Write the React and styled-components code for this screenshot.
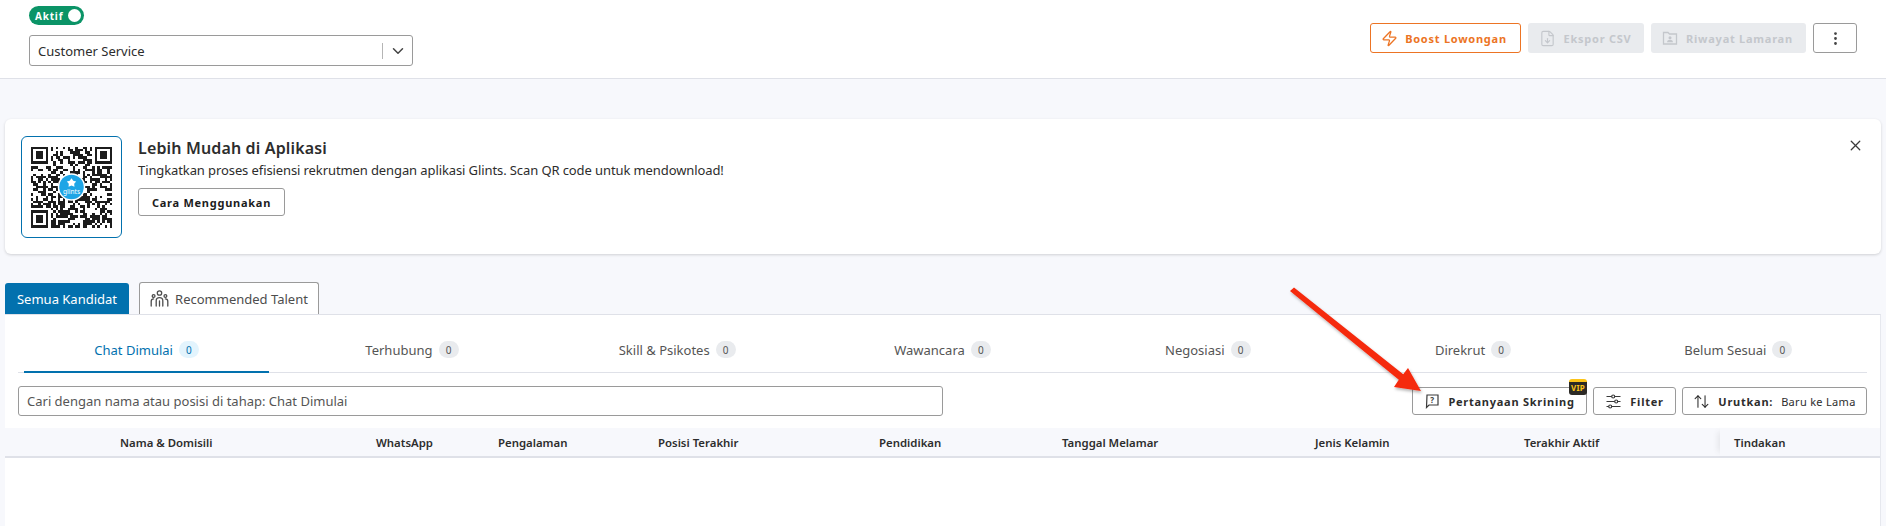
import React from "react";
import styled, { createGlobalStyle } from "styled-components";
import { ArrowUpDown, ChevronDown, FileDown, MoreVertical, X, Zap } from "lucide-react";

const GlobalStyle = createGlobalStyle`
  * { box-sizing: border-box; }
  html, body { margin: 0; padding: 0; background: #f7f8fc; }
  body { font-family: "Noto Sans", "Open Sans", sans-serif; color: #2d2d2d; overflow: hidden; }
`;

const stages = ["Chat Dimulai", "Terhubung", "Skill & Psikotes", "Wawancara", "Negosiasi", "Direkrut", "Belum Sesuai"];
const columns = ["Nama & Domisili", "WhatsApp", "Pengalaman", "Posisi Terakhir", "Pendidikan", "Tanggal Melamar", "Jenis Kelamin", "Terakhir Aktif"];

// pseudo random modules for the qr code, corners are the finder squares
function qrModules(size) {
  const cells = [];
  let seed = 71;
  for (let y = 0; y < size; y++) {
    for (let x = 0; x < size; x++) {
      seed = (seed * 1103 + 12345 + x * 7 + y * 13) % 65536;
      const inFinder = (x < 8 && y < 8) || (x >= size - 8 && y < 8) || (x < 8 && y >= size - 8);
      if (!inFinder && (seed >> 5) % 100 < 52) cells.push([x, y]);
    }
  }
  return cells;
}

function Finder({ x, y }) {
  return (
    <g>
      <rect x={x + 0.5} y={y + 0.5} width="6" height="6" fill="none" stroke="#1c1c1c" />
      <rect x={x + 2} y={y + 2} width="3" height="3" fill="#1c1c1c" />
    </g>
  );
}

function QrCode() {
  const size = 33;
  return (
    <QrSvg viewBox={`0 0 ${size} ${size}`} shapeRendering="crispEdges">
      {qrModules(size).map(([x, y]) => (
        <rect key={`${x}-${y}`} x={x} y={y} width="1" height="1" fill="#1c1c1c" />
      ))}
      <Finder x={0} y={0} />
      <Finder x={size - 7} y={0} />
      <Finder x={0} y={size - 7} />
      <g shapeRendering="auto">
        <circle cx="16.5" cy="16.5" r="5.6" fill="#fff" />
        <circle cx="16.5" cy="16.5" r="5" fill="#1ea5e6" />
        <path d="M16.5 12.9l.7 1.100 1.200.3-.8.9.1 1.200-1.200-.5-1.200.5.1-1.200-.8-.9 1.200-.3z" fill="#fff" />
        <text x="16.5" y="19.4" textAnchor="middle" fontSize="2.7" fill="#fff" fontFamily="Noto Sans, sans-serif">glints</text>
      </g>
    </QrSvg>
  );
}

function HistoryIcon() {
  return (
    <svg width="16" height="16" viewBox="0 0 16 16" fill="none" stroke="currentColor" strokeWidth="1.3">
      <path d="M1.5 2.5h4.5l1.5 1.5h7v10h-13z" />
      <circle cx="8" cy="7.8" r="1.5" fill="currentColor" stroke="none" />
      <path d="M5 12.2c.3-1.7 1.4-2.4 3-2.4s2.7.7 3 2.4z" fill="currentColor" stroke="none" />
    </svg>
  );
}

function PeopleIcon() {
  return (
    <svg width="19" height="19" viewBox="0 0 19 19" fill="none" stroke="#4d4d4d" strokeWidth="1.3" strokeLinecap="round">
      <circle cx="9.5" cy="4" r="2.2" />
      <circle cx="3.6" cy="7" r="1.4" />
      <circle cx="15.4" cy="7" r="1.4" />
      <path d="M6.2 17v-5.2c0-2 1.4-3.1 3.3-3.1s3.3 1.100 3.300 3.100V17" />
      <path d="M1.200 17v-4.600c0-1.500.9-2.500 2.400-2.500" />
      <path d="M17.800 17v-4.600c0-1.500-.9-2.500-2.400-2.500" />
      <path d="M9.500 12v5" />
    </svg>
  );
}

function QuestionIcon() {
  return (
    <svg width="16" height="16" viewBox="0 0 16 16" fill="none" stroke="#3a3a3a" strokeWidth="1.2">
      <path d="M3 2h11v10H5l-2.500 2.500z" />
      <text x="8.500" y="10" textAnchor="middle" fontSize="8" fill="#3a3a3a" stroke="none" fontFamily="Noto Sans, sans-serif">?</text>
    </svg>
  );
}

function FilterIcon() {
  return (
    <svg width="17" height="17" viewBox="0 0 17 17" fill="none" stroke="#3a3a3a" strokeWidth="1.2">
      <path d="M1.500 3.500h5.200M9.700 3.500h5.800M1.500 8.500h8.200M12.700 8.500h2.800M1.500 13.500h2.200M6.700 13.500h8.800" />
      <circle cx="8.200" cy="3.500" r="1.500" />
      <circle cx="11.200" cy="8.500" r="1.500" />
      <circle cx="5.200" cy="13.500" r="1.500" />
    </svg>
  );
}

export default function App() {
  return (
    <Page>
      <GlobalStyle />
      <TopBar>
        <JobColumn>
          <Toggle>
            <ToggleLabel>Aktif</ToggleLabel>
            <ToggleKnob />
          </Toggle>
          <JobSelect>
            <JobName>Customer Service</JobName>
            <SelectDivider />
            <SelectArrow>
              <ChevronDown size={18} strokeWidth={2} />
            </SelectArrow>
          </JobSelect>
        </JobColumn>
        <TopActions>
          <BoostButton>
            <Zap size={17} strokeWidth={1.8} />
            Boost Lowongan
          </BoostButton>
          <DisabledButton $width={116}>
            <FileDown size={17} strokeWidth={1.6} />
            Ekspor CSV
          </DisabledButton>
          <DisabledButton $width={155}>
            <HistoryIcon />
            Riwayat Lamaran
          </DisabledButton>
          <MoreButton>
            <MoreVertical size={17} strokeWidth={2} />
          </MoreButton>
        </TopActions>
      </TopBar>

      <Banner>
        <QrFrame>
          <QrCode />
        </QrFrame>
        <BannerBody>
          <BannerTitle>Lebih Mudah di Aplikasi</BannerTitle>
          <BannerText>
            Tingkatkan proses efisiensi rekrutmen dengan aplikasi Glints. Scan QR code untuk mendownload!
          </BannerText>
          <GuideButton>Cara Menggunakan</GuideButton>
        </BannerBody>
        <BannerClose>
          <X size={17} strokeWidth={1.8} />
        </BannerClose>
      </Banner>

      <TabRow>
        <MainTab>Semua Kandidat</MainTab>
        <TalentTab>
          <PeopleIcon />
          Recommended Talent
        </TalentTab>
      </TabRow>

      <Panel>
        <StageRow>
          {stages.map((stage, i) => (
            <StageTab key={stage} $active={i === 0}>
              {stage}
              <StageCount $active={i === 0}>0</StageCount>
            </StageTab>
          ))}
        </StageRow>
        <ToolRow>
          <SearchBox>Cari dengan nama atau posisi di tahap: Chat Dimulai</SearchBox>
          <ToolActions>
            <ToolButton $width={175}>
              <QuestionIcon />
              Pertanyaan Skrining
              <VipBadge>VIP</VipBadge>
            </ToolButton>
            <ToolButton $width={83}>
              <FilterIcon />
              Filter
            </ToolButton>
            <ToolButton $width={185}>
              <ArrowUpDown size={17} strokeWidth={1.5} />
              Urutkan:
              <SortValue>Baru ke Lama</SortValue>
            </ToolButton>
          </ToolActions>
        </ToolRow>
        <TableHead>
          {columns.map((col) => (
            <HeadCell key={col}>{col}</HeadCell>
          ))}
          <ActionCell>Tindakan</ActionCell>
        </TableHead>
      </Panel>

      <Arrow viewBox="0 0 140 110" width="140" height="110">
        <defs>
          <filter id="arrowShadow" x="-20%" y="-20%" width="140%" height="140%">
            <feDropShadow dx="1" dy="2" stdDeviation="1.500" floodColor="#000" floodOpacity="0.3" />
          </filter>
        </defs>
        <g filter="url(#arrowShadow)" fill="#f5290f">
          <path d="M7 .5L116.200 87.200 121 81l13 23-27-4 4.800-7.300L3 4z" />
        </g>
      </Arrow>
    </Page>
  );
}

const Page = styled.div`
  position: relative;
  width: 1886px;
  height: 526px;
  overflow: hidden;
  background: #f7f8fc;
`;
const TopBar = styled.header`
  display: flex;
  justify-content: space-between;
  align-items: flex-start;
  height: 79px;
  padding: 6px 29px 0;
  background: #fff;
  border-bottom: 1px solid #dfe1e8;
`;
const JobColumn = styled.div`
  display: flex;
  flex-direction: column;
  align-items: flex-start;
  gap: 10px;
`;
const Toggle = styled.div`
  display: flex;
  align-items: center;
  justify-content: space-between;
  width: 55px;
  height: 19px;
  padding: 0 3px 0 6px;
  border-radius: 10px;
  background: #0b9467;
`;
const ToggleLabel = styled.span`
  font-size: 10px;
  font-weight: 700;
  letter-spacing: 0.8px;
  color: #fff;
`;
const ToggleKnob = styled.span`
  width: 13px;
  height: 13px;
  border-radius: 50%;
  background: #fff;
`;
const JobSelect = styled.div`
  display: flex;
  align-items: center;
  width: 384px;
  height: 31px;
  padding: 0 0 0 8px;
  background: #fff;
  border: 1px solid #9a9a9a;
  border-radius: 3px;
`;
const JobName = styled.span`
  flex: 1;
  font-size: 13px;
  color: #2d2d2d;
`;
const SelectDivider = styled.span`
  width: 1px;
  height: 16px;
  background: #b5b5b5;
`;
const SelectArrow = styled.span`
  display: flex;
  justify-content: center;
  width: 29px;
  color: #444;
`;
const TopActions = styled.div`
  display: flex;
  gap: 7px;
  margin-top: 17px;
`;
const BoostButton = styled.button`
  display: flex;
  align-items: center;
  justify-content: center;
  gap: 7px;
  width: 151px;
  height: 30px;
  padding: 0 3px 0 0;
  background: #fff;
  border: 1px solid #ec7424;
  border-radius: 3px;
  color: #ec7424;
  font: 700 11px "Noto Sans", sans-serif;
  letter-spacing: 0.75px;
`;
const DisabledButton = styled.button`
  display: flex;
  align-items: center;
  justify-content: center;
  gap: 8px;
  width: ${(p) => p.$width}px;
  height: 30px;
  padding: 0 2px 0 0;
  background: #e9ebee;
  border: none;
  border-radius: 3px;
  color: #c4c7cc;
  font: 700 11px "Noto Sans", sans-serif;
  letter-spacing: 0.75px;
`;
const MoreButton = styled.button`
  display: flex;
  align-items: center;
  justify-content: center;
  width: 44px;
  height: 30px;
  padding: 0;
  background: #fff;
  border: 1px solid #9a9a9a;
  border-radius: 3px;
  color: #444;
`;
const Banner = styled.section`
  position: relative;
  display: flex;
  gap: 16px;
  height: 135px;
  margin: 40px 5px 0;
  padding: 17px 16px;
  background: #fff;
  border-radius: 6px;
  box-shadow: 0 1px 3px rgba(0, 0, 0, 0.16);
`;
const QrFrame = styled.div`
  display: flex;
  align-items: center;
  justify-content: center;
  width: 101px;
  height: 102px;
  background: #fff;
  border: 1px solid #0271ae;
  border-radius: 6px;
`;
const QrSvg = styled.svg`
  width: 81px;
  height: 82px;
`;
const BannerBody = styled.div`
  display: flex;
  flex-direction: column;
  align-items: flex-start;
`;
const BannerTitle = styled.h2`
  margin: 0;
  font-size: 16px;
  line-height: 24px;
  font-weight: 600;
  letter-spacing: 0.15px;
  color: #2d2d2d;
`;
const BannerText = styled.p`
  margin: 0;
  font-size: 13px;
  line-height: 20px;
  letter-spacing: -0.1px;
  color: #2d2d2d;
`;
const GuideButton = styled.button`
  width: 147px;
  height: 28px;
  margin-top: 8px;
  padding: 0;
  background: #fff;
  border: 1px solid #9a9a9a;
  border-radius: 3px;
  color: #1c1c1c;
  font: 700 11px "Noto Sans", sans-serif;
  letter-spacing: 0.75px;
`;
const BannerClose = styled.span`
  position: absolute;
  top: 18px;
  right: 17px;
  display: flex;
  color: #3a3a3a;
`;
const TabRow = styled.div`
  display: flex;
  align-items: flex-end;
  gap: 10px;
  height: 32px;
  margin: 28px 5px 0;
`;
const MainTab = styled.div`
  display: flex;
  align-items: center;
  justify-content: center;
  width: 124px;
  height: 31px;
  background: #0271ae;
  border-radius: 3px 3px 0 0;
  color: #fff;
  font-size: 13px;
`;
const TalentTab = styled.div`
  display: flex;
  align-items: center;
  justify-content: center;
  gap: 6px;
  width: 180px;
  height: 32px;
  background: #fff;
  border: 1px solid #9a9a9a;
  border-bottom: none;
  border-radius: 3px 3px 0 0;
  color: #4d4d4d;
  font-size: 13px;
`;
const Panel = styled.section`
  height: 220px;
  margin: 0 5px;
  background: #fff;
  border-top: 1px solid #dfe1e8;
  border-right: 1px solid #e6e8ee;
`;
const StageRow = styled.nav`
  display: grid;
  grid-template-columns: repeat(7, 1fr);
  gap: 20px;
  height: 58px;
  margin: 0 13px;
  padding: 0 6px;
  border-bottom: 1px solid #dfe1e8;
`;
const StageTab = styled.div`
  display: flex;
  align-items: center;
  justify-content: center;
  gap: 6px;
  padding-top: 13px;
  margin-bottom: -1px;
  font-size: 13px;
  color: ${(p) => (p.$active ? "#0271ae" : "#555")};
  border-bottom: 2px solid ${(p) => (p.$active ? "#0271ae" : "transparent")};
`;
const StageCount = styled.span`
  display: flex;
  align-items: center;
  justify-content: center;
  min-width: 20px;
  height: 17px;
  border-radius: 9px;
  font-size: 10px;
  background: ${(p) => (p.$active ? "#e3f4fd" : "#e9ebee")};
  color: ${(p) => (p.$active ? "#0271ae" : "#555")};
`;
const ToolRow = styled.div`
  display: flex;
  justify-content: space-between;
  align-items: center;
  height: 30px;
  margin: 13px 13px 0;
`;
const SearchBox = styled.div`
  display: flex;
  align-items: center;
  width: 925px;
  height: 30px;
  padding: 0 8px;
  background: #fff;
  border: 1px solid #9a9a9a;
  border-radius: 3px;
  font-size: 13px;
  color: #555;
`;
const ToolActions = styled.div`
  display: flex;
  gap: 6px;
`;
const ToolButton = styled.button`
  position: relative;
  display: flex;
  align-items: center;
  justify-content: center;
  gap: 8px;
  width: ${(p) => p.$width}px;
  height: 28px;
  padding: 0;
  background: #fff;
  border: 1px solid #9a9a9a;
  border-radius: 3px;
  color: #2d2d2d;
  font: 700 11px "Noto Sans", sans-serif;
  letter-spacing: 0.75px;
`;
const SortValue = styled.span`
  font-weight: 400;
  letter-spacing: 0.3px;
`;
const VipBadge = styled.span`
  position: absolute;
  top: -9px;
  right: -1px;
  width: 18px;
  height: 16px;
  background: #2c2a26;
  border-top: 3px solid #fcc419;
  border-radius: 3px;
  color: #fcc419;
  font-size: 8px;
  line-height: 12px;
  font-weight: 700;
  letter-spacing: 0.2px;
`;
const TableHead = styled.div`
  position: relative;
  display: grid;
  grid-template-columns: 256px 122px 160px 221px 183px 253px 209px 211px 1fr;
  align-items: center;
  height: 30px;
  margin-top: 12px;
  padding-left: 115px;
  background: #f7f8fc;
  border-bottom: 2px solid #dfe1e8;
`;
const HeadCell = styled.div`
  font-size: 11.4px;
  font-weight: 600;
  color: #2d2d2d;
  white-space: nowrap;
`;
const ActionCell = styled(HeadCell)`
  position: absolute;
  top: 0;
  right: 0;
  bottom: 0;
  left: 1715px;
  display: flex;
  align-items: center;
  padding-left: 14px;
  background: #f7f8fc;
  box-shadow: -6px 0 6px -4px rgba(0, 0, 0, 0.08);
`;
const Arrow = styled.svg`
  position: absolute;
  left: 1287px;
  top: 287px;
`;
